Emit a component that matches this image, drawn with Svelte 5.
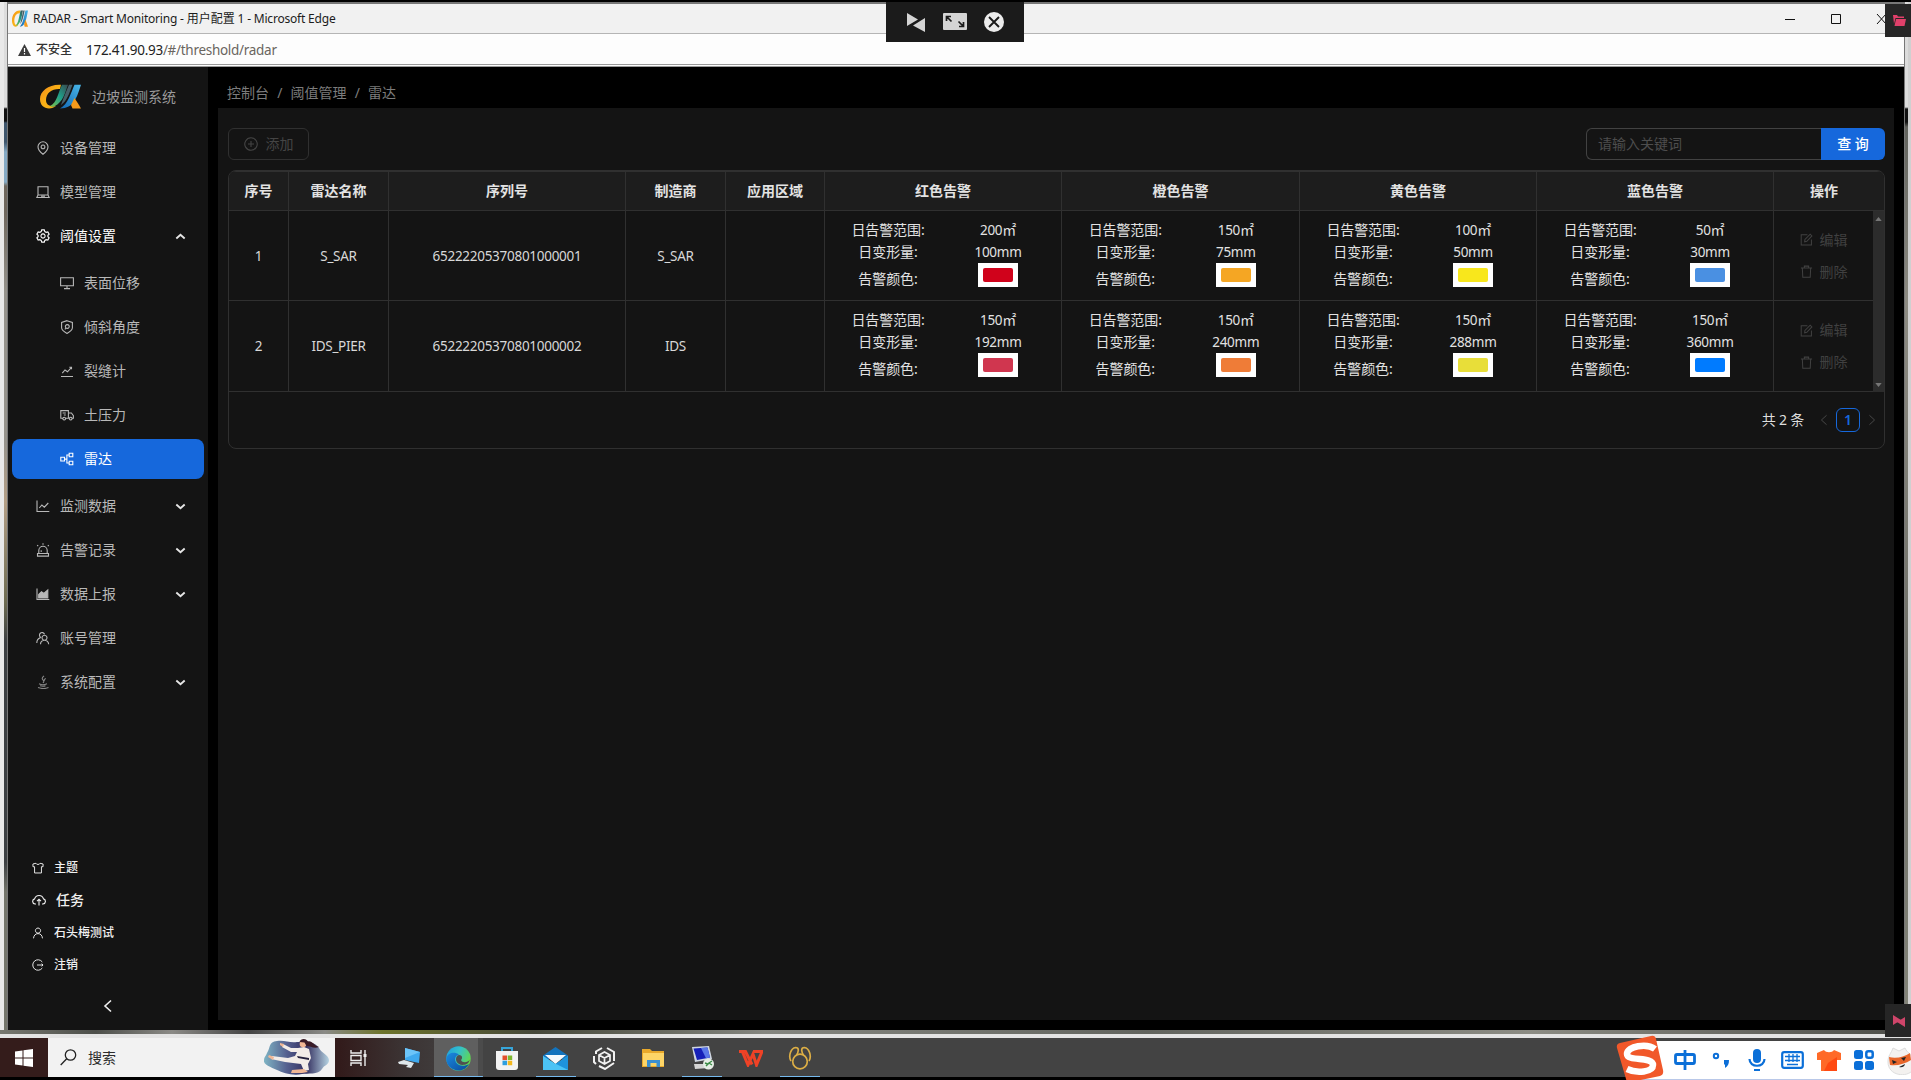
<script>
  // Outline icons on a 14 x 14 grid
  const icons = {
    pin: 'M7 13.3C4 11 2 8.6 2 5.8a5 5 0 0 1 10 0C12 8.600 10 11 7 13.300ZM7 4a1.900 1.900 0 1 0 .01 0Z',
    laptop: 'M2 1.800h10v8.200H2ZM2 10 .8 12.500h12.400L12 10M5 11.300h4',
    gear: 'M5.700 .9h2.600l.5 1.700 1.300.75 1.750-.45 1.300 2.200L11.900 6.300v1.400l1.250 1.200-1.300 2.200-1.750-.45-1.300.75-.5 1.700H5.700l-.5-1.700-1.300-.75-1.750.45-1.300-2.200L2.100 7.700V6.300L.85 5.100l1.300-2.200 1.750.45 1.300-.75ZM7 4.900a2.100 2.100 0 1 0 .01 0Z',
    monitor: 'M.6 1.700h12.800v8H.6ZM7 9.700v2.800M4 12.600h6',
    shield: 'M7 .7 12.400 2.400v5.400c0 2.500-3.200 4.400-5.400 5.600C4.800 12.200 1.600 10.300 1.600 7.800V2.400ZM7.300 4.600a1.900 1.900 0 1 0 .01 0ZM6 8 4.900 9.300',
    trend: 'M1 12.500h12M2.300 9.200 5 6l2.500 1.800L11.500 3.300M9.300 3.300h2.200v2',
    truck: 'M2.500 10.300H.8V2.600h7.600v7.700H5.800M8.400 5h3l2 2.700v2.600h-1M9 10.300h-.6M2.600 5h3.200M3.800 7h2M4.200 9.200a1.400 1.400 0 1 0 .01 0ZM10.700 9.200a1.400 1.400 0 1 0 .01 0Z',
    nodes: 'M.8 5.300h3.700v3.700H.8ZM9.200 1.200h3.600v3.600H9.200ZM9.200 9.200h3.600v3.600H9.200ZM4.500 7.100h2.400M9.200 3H6.900v8h2.300',
    line: 'M1 1.500v11h12.300M3.300 9 5.900 6l2.400 2.200 4-4.200',
    alarm: 'M2.800 10.500V7.500a4.200 4.200 0 0 1 8.400 0v3M1.500 10.500h11v2.600h-11ZM7 .3v1.500M1.200 2.200l1 1M12.800 2.200l-1 1M5.200 9V7.300',
    team: 'M5 6.500a2.600 2.600 0 1 1 3.500-3.300M.8 12c0-3 1.500-4.600 3.600-5.300M8.500 4.200a2.500 2.500 0 1 0 .01 0ZM4.500 13.300c.1-2.600 1.600-4.100 4-4.100s3.900 1.500 4.200 4.100',
    cup: 'M8 .8C5.500 3 6 4 7.300 5.300S7.500 7 7 8M9.800 3.500C8 4.500 8 5.200 8.500 6M3 8.800c2 1 6 .9 8 0M4 10.800c2 .6 4 .6 5.500 0M2 12.600c3 1 8 1 10.500 0',
    shirt: 'M4.600 1.500C5 3.300 9 3.300 9.400 1.500L12.900 2.300v3.200H11v7.300H3V5.500H1.100V2.300Z',
    cloud: 'M4 11H3a2.600 2.600 0 0 1-.4-5.100 4.600 4.600 0 0 1 8.900 0A2.600 2.600 0 0 1 11 11h-1M7 12.600V6.300M5 8.200l2-2 2 2',
    user: 'M7 1.200a3 3 0 1 0 .01 0ZM1.800 13.200C2 10 4 7.700 7 7.700s5 2.300 5.200 5.500',
    logout: 'M12 3.500a6.100 6.100 0 1 0 0 7M5.800 7h7M11.200 5.500 12.900 7l-1.700 1.500',
    plus: 'M7 .8a6.200 6.200 0 1 0 .01 0ZM7 4v6M4 7h6',
    edit: 'M8 1.800H1.300v11h11V7M5 9.500 5.300 7 11 1.200l1.800 1.900L7.300 9Z',
    trash: 'M1 3.300h12M4.700 3.300V1.200h4.600v2.100M2.500 3.300l.5 9.900h8l.5-9.900',
    left: 'M10 1.500 4 7l6 5.500',
    right: 'M4 1.500 10 7l-6 5.500',
    up: 'M2.500 9.200 7 5.200l4.500 4',
    down: 'M2.500 4.800 7 8.800l4.500-4'
  };

  const menuTop = [
    { icon: 'pin', label: '设备管理' },
    { icon: 'laptop', label: '模型管理' },
    { icon: 'gear', label: '阈值设置', arrow: 'up', open: true }
  ];
  const subMenu = [
    { icon: 'monitor', label: '表面位移' },
    { icon: 'shield', label: '倾斜角度' },
    { icon: 'trend', label: '裂缝计' },
    { icon: 'truck', label: '土压力' },
    { icon: 'nodes', label: '雷达', active: true }
  ];
  const menuBottom = [
    { icon: 'line', label: '监测数据', arrow: 'down' },
    { icon: 'alarm', label: '告警记录', arrow: 'down' },
    { icon: 'area', label: '数据上报', arrow: 'down' },
    { icon: 'team', label: '账号管理' },
    { icon: 'cup', label: '系统配置', arrow: 'down', dim: true }
  ];
  const footer = [
    { icon: 'shirt', label: '主题' },
    { icon: 'cloud', label: '任务', big: true },
    { icon: 'user', label: '石头梅测试' },
    { icon: 'logout', label: '注销' }
  ];
  const headers = ['序号', '雷达名称', '序列号', '制造商', '应用区域', '红色告警', '橙色告警', '黄色告警', '蓝色告警', '操作'];
  const rows = [
    {
      cells: ['1', 'S_SAR', '65222205370801000001', 'S_SAR', ''],
      alerts: [
        ['200', '100mm', '#d0021b'],
        ['150', '75mm', '#f5a623'],
        ['100', '50mm', '#f8e71c'],
        ['50', '30mm', '#4a90e2']
      ]
    },
    {
      cells: ['2', 'IDS_PIER', '65222205370801000002', 'IDS', ''],
      alerts: [
        ['150', '192mm', '#d0364f'],
        ['150', '240mm', '#ef7c37'],
        ['150', '288mm', '#e8de39'],
        ['150', '360mm', '#007bff']
      ]
    }
  ];
</script>

{#snippet icon(name, size = 14)}
  <svg class="ico" width={size} height={size} viewBox="0 0 14 14">
    {#if name === 'area'}
      <path d="M1 1.500v11h12.300" />
      <path class="solid" d="M2.700 11V7.500L5.500 4.800l2.300 1.700 4-3.500V11Z" />
    {:else}
      <path d={icons[name]} />
    {/if}
  </svg>
{/snippet}

{#snippet menuItem(item, sub)}
  <div class="item" class:sub class:active={item.active} class:open={item.open} class:dim={item.dim}>
    {@render icon(item.icon)}
    <span>{item.label}</span>
    {#if item.arrow}
      <i class="caret">{@render icon(item.arrow, 13)}</i>
    {/if}
  </div>
{/snippet}

{#snippet logo(w, h)}
  <svg width={w} height={h} viewBox="0 0 41 25" preserveAspectRatio="none">
    <defs>
      <linearGradient id="lg-y" x1="0" y1="0" x2="1" y2="1"><stop offset="0" stop-color="#f08a1c" /><stop offset=".5" stop-color="#fbb215" /><stop offset="1" stop-color="#e9a51b" /></linearGradient>
      <linearGradient id="lg-g" x1="1" y1="0" x2="0" y2="1"><stop offset="0" stop-color="#3a4a50" /><stop offset=".5" stop-color="#1fa08a" /><stop offset="1" stop-color="#7fc04a" /></linearGradient>
      <linearGradient id="lg-b" x1="1" y1="0" x2="0" y2="1"><stop offset="0" stop-color="#49b7e8" /><stop offset="1" stop-color="#1268b4" /></linearGradient>
    </defs>
    <path d="M21 .8C9 0 0 7 0 15c0 6 4 9.500 9 9.500 3 0 5-1 7-2.500-6 1-10-1-10-6C6 9 12 4.500 20 5Z" fill="url(#lg-y)" />
    <path d="M22 .8h6C25 9 23 18 15 22c-2 1-4 1-5 0 7-3 8-13 12-21.200Z" fill="url(#lg-g)" />
    <path d="M29 .8h3.500C29 10 27 17 21 21c2-6 5-13 8-20.200Z" fill="#47606a" />
    <path d="M34.500 .8H41C37 13 34 24.500 20 24.500c8-4 11-16 14.500-23.700Z" fill="url(#lg-b)" />
    <path d="M34.500 14c2 3 4.500 7 6.500 10.500h-8.500L31 21Z" fill="#f59a1b" />
  </svg>
{/snippet}

<div class="desktop">
  <div class="workarea">
    <div class="backdrop left"></div>
    <div class="window">
      <header class="titlebar">
        {@render logo(16, 17)}
        <span class="title">RADAR - Smart Monitoring - <b>用户配置</b> 1 - Microsoft Edge</span>
        <svg class="winctl" width="108" height="14" viewBox="0 0 108 14">
          <path d="M2 7.500h10M48.500 2.500h9v9h-9ZM94 2l9 10M103 2l-9 10" />
        </svg>
      </header>
      <div class="address">
        <svg width="13" height="12" viewBox="0 0 13 12"><path d="M6.500 0 13 12H0Z" fill="#3b3b3b" /><path d="M6.500 4v4M6.500 9v1.500" stroke="#fff" stroke-width="1.200" /></svg>
        <b>不安全</b>
        <span class="url">172.41.90.93<em>/#/threshold/radar</em></span>
      </div>

      <div class="app">
        <aside>
          <div class="brand">{@render logo(41, 25)}<span>边坡监测系统</span></div>
          <nav>
            {#each menuTop as m}{@render menuItem(m, false)}{/each}
            <div class="group">
              {#each subMenu as m}{@render menuItem(m, true)}{/each}
            </div>
            {#each menuBottom as m}{@render menuItem(m, false)}{/each}
          </nav>
          <div class="foot">
            {#each footer as f}
              <div class="footitem" class:big={f.big}>{@render icon(f.icon, f.big ? 14 : 12)}<span>{f.label}</span></div>
            {/each}
          </div>
          <div class="collapse">{@render icon('left', 14)}</div>
        </aside>

        <main>
          <div class="crumbs"><span>控制台</span><i>/</i><span>阈值管理</span><i>/</i><span>雷达</span></div>
          <section class="panel">
            <div class="tools">
              <button class="add">{@render icon('plus')}<span>添加</span></button>
              <div class="search">
                <div class="field">请输入关键词</div>
                <button class="go">查 询</button>
              </div>
            </div>

            <div class="table">
              <div class="thead cols">
                {#each headers as h}<div class="th">{h}</div>{/each}
              </div>
              <div class="tbody">
                <div class="trs">
                  {#each rows as r}
                    <div class="tr cols">
                      {#each r.cells as c}<div class="td">{c}</div>{/each}
                      {#each r.alerts as a}
                        <div class="td alert">
                          <span class="k">日告警范围:</span><span>{a[0]}<u>㎡</u></span>
                          <span class="k">日变形量:</span><span>{a[1]}</span>
                          <span class="k low">告警颜色:</span><span class="swatch"><i style="background:{a[2]}"></i></span>
                        </div>
                      {/each}
                      <div class="td ops">
                        <div>{@render icon('edit', 13)}<span>编辑</span></div>
                        <div>{@render icon('trash', 13)}<span>删除</span></div>
                      </div>
                    </div>
                  {/each}
                </div>
                <div class="scroll">
                  <svg width="7" height="4" viewBox="0 0 8 5"><path d="M4 0 8 5H0Z" /></svg>
                  <svg width="7" height="4" viewBox="0 0 8 5"><path d="M0 0h8L4 5Z" /></svg>
                </div>
              </div>
              <div class="pager">
                <span class="total">共 2 条</span>
                {@render icon('left', 12)}
                <span class="page">1</span>
                {@render icon('right', 12)}
              </div>
            </div>
          </section>
        </main>
      </div>
    </div>
    <div class="backdrop right"></div>
  </div>
  <div class="strip"></div>

  <div class="taskbar">
    <div class="start">
      <svg width="18" height="18" viewBox="0 0 18 18"><path fill="#fff" d="M0 2.500 7.500 1.500v7H0ZM8.500 1.300 18 0v8.500H8.500ZM0 9.500h7.500v7L0 15.500ZM8.500 9.500H18V18L8.500 16.700Z" /></svg>
    </div>
    <div class="find">
      <svg width="17" height="17" viewBox="0 0 17 17"><circle cx="10.500" cy="6" r="5.200" /><path d="M6.700 9.800.7 16" /></svg>
      <span>搜索</span>
      <svg class="art" width="68" height="38" viewBox="0 0 68 38">
        <defs><linearGradient id="sky"><stop offset="0" stop-color="#7fb4c4" /><stop offset=".35" stop-color="#55608f" /><stop offset=".65" stop-color="#343060" /><stop offset="1" stop-color="#b6d3e2" /></linearGradient></defs>
        <path fill="url(#sky)" d="M4 14C8 8 5 3 14 2c8-1 12 2 20 1 8 0 18-1 22 6 3 6 9 6 10 12 0 5-5 5-7 9-4 6-14 4-20 5-9 2-19-1-25-4C8 28 0 26 1 21c0-3 2-4 3-7Z" />
        <path d="M43 3c6-3 7 3 13 5-5 2-9-1-12-1Z" fill="#3a1c28" />
        <path d="m20 5 8 4 7 0 6-1 5 2 2 9-3 6 1 6-5 1-3-7-16-2-14-3 1-3 16 2 7-2 2-4-6 0-9-5Z" fill="#f2ece8" />
        <circle cx="40" cy="5" r="3.300" fill="#f1b795" />
        <path d="M36.500 3c1-4 8-4 9 1l-2 3-2-3.500Z" fill="#3a1c28" />
        <path d="m6 16 5 2-1 3-5-3ZM17 4l4 1-1 3-3-2ZM29 31l12-1 4 3-6 1-11 0Z" fill="#f1b795" />
        <path d="m34 17 12 2v2l-11-2Z" fill="#25213d" />
      </svg>
    </div>
    <div class="tb view">
      <svg width="18" height="18" viewBox="0 0 18 18" fill="none" stroke="#eee" stroke-width="1.400"><path d="M1 1v3h10V1M1 17v-3h10v3M1 6.500h10v5H1ZM15 1v16" /><path d="M15 5v3" stroke-width="3" /></svg>
    </div>
    <div class="tb">
      <svg width="24" height="22" viewBox="0 0 24 22"><path d="m8 1 15 4-1 11-14-3Z" fill="#3fa9ee" /><path d="m8 1 15 4-15 6Z" fill="#6cc4f8" /><path d="m1 15 6-2 10 3-3 5-5-1 2-2-9-1Z" fill="#dfe6ea" /></svg>
    </div>
    <div class="tb on lit">
      <svg width="25" height="25" viewBox="0 0 25 25">
        <defs>
          <linearGradient id="e1" x1="0" y1="0" x2="1" y2=".5"><stop offset="0" stop-color="#1b9de2" /><stop offset=".5" stop-color="#35c1c9" /><stop offset="1" stop-color="#62d84e" /></linearGradient>
          <linearGradient id="e2" x1="0" y1="0" x2="1" y2="1"><stop offset="0" stop-color="#1b8be0" /><stop offset="1" stop-color="#0a4a9c" /></linearGradient>
        </defs>
        <circle cx="12.500" cy="12.500" r="12.200" fill="url(#e1)" />
        <path d="M.4 12C2 6 9 5.500 13 8.500c-5 1-5.500 8 0 10.500 3 1.500 7 .8 10-1-3 6-10 8-15 5.500C3 21.500 0 17 .4 12Z" fill="url(#e2)" />
        <path d="M13 9c4 0 3.500 4 2 5 1 3 7 3 8.700-.5C23 19 16 20 13 18c-4-2-4-8 0-9Z" fill="#505050" />
      </svg>
    </div>
    <div class="tb">
      <svg width="24" height="25" viewBox="0 0 24 25"><path d="M7 6V2h10v4" fill="none" stroke="#36a5da" stroke-width="2" /><path d="M1 5h22v16a3 3 0 0 1-3 3H4a3 3 0 0 1-3-3Z" fill="#f3f3f3" /><path fill="#e2502d" d="M7.500 9.500H12V14H7.500Z" /><path fill="#7db72f" d="M12.700 9.500h4.500V14h-4.500Z" /><path fill="#2f9fe0" d="M7.500 14.700H12v4.500H7.500Z" /><path fill="#f4b81d" d="M12.700 14.700h4.500v4.500h-4.500Z" /></svg>
    </div>
    <div class="tb on">
      <svg width="25" height="23" viewBox="0 0 25 23"><path d="M0 8.500 12.500 0 25 8.500V12H0Z" fill="#1373bd" /><path d="M2 8h21l-10.500 9Z" fill="#f5f9fc" /><path d="M0 9v14h25V9L12.500 17Z" fill="#35b4ee" /><path d="m13 16.700 12-7.700v14Z" fill="#1e93dc" /><path d="m0 9 12.500 8L25 23H0Z" fill="#4cc3f5" /></svg>
    </div>
    <div class="tb">
      <svg width="23" height="24" viewBox="0 0 23 24" fill="none" stroke="#f2f2f2" stroke-width="2"><path d="M9 2 3 5.500V8M1 10v6l2 2M14 2l7 4v9M21 17l-9 6-6-3" /><path d="m11.500 6 5.500 3v6l-5.500 3L6 15V9ZM6 9l5.500 3L17 9M11.500 12v6" stroke-width="1.700" /></svg>
    </div>
    <div class="tb">
      <svg width="23" height="20" viewBox="0 0 23 20"><path d="M0 1h8l2 2h12v16H0Z" fill="#e9a92b" /><path d="M1 5h21v13H1Z" fill="#fdd567" /><path d="M5 19v-7h13v7h-3.500v-4h-6v4Z" fill="#3b8fd0" /></svg>
    </div>
    <div class="tb on">
      <svg width="23" height="24" viewBox="0 0 23 24"><path d="m1 1 17-1 3 13-17 3Z" fill="#cfd6e2" /><path d="m2.500 2.500 14-1 2.500 10-13 2.500Z" fill="#1620b8" /><path d="m10 2 6.500-.5 2.500 10-4 .8Z" fill="#5a78e8" /><path d="M3 18h12l3 4-14 1Z" fill="#d5d5d5" /><circle cx="17.500" cy="18" r="5.500" fill="#e6eee6" /><path d="m14 17 3 1-2 2M21 15l-3 2 3 2" fill="none" stroke="#3a8b45" stroke-width="1.400" /></svg>
    </div>
    <div class="tb">
      <svg width="24" height="17" viewBox="0 0 24 17" fill="none" stroke="#ef4226" stroke-width="3"><path d="M0 1.500h6.500L13 14.500M3.500 2 9 15 14 4l3.500 11L23 1.500h-9" /></svg>
    </div>
    <div class="tb on">
      <svg width="24" height="24" viewBox="0 0 24 24" fill="none" stroke="#dcae45" stroke-width="1.700"><circle cx="12" cy="15.500" r="7.300" /><path d="M3 15C0 10 3 2 7.500 1.500 12 1.500 10 7 8.500 9M21 15c3-5 0-13-4.500-13.500C12 1.500 14 7 15.500 9" /></svg>
    </div>
  </div>

  <div class="ime">
    <svg class="sogou" width="48" height="47" viewBox="0 0 48 47"><path d="M4 8 35 1q4-1 5 3l7 31q1 5-3 6L15 47q-4 1-5-3L1 13q-1-4 3-5Z" fill="#f1582a" /><path d="M39 14C31 8 11 11 11 19c0 8 26 2 26 11 0 7-16 9-26 4" fill="none" stroke="#fff" stroke-width="6.500" /></svg>
    <span><svg width="22" height="22" viewBox="0 0 22 22" fill="none" stroke="#0b6fd8" stroke-width="2.800"><rect x="1.500" y="5.500" width="19" height="9" rx="1.500" /><path d="M11 1v20" /></svg></span>
    <span><svg width="18" height="17" viewBox="0 0 18 17"><circle cx="4" cy="4" r="2.200" fill="none" stroke="#0b6fd8" stroke-width="2" /><path d="M12 8h5c0 4-1 6-4 8v-3l-1-1Z" fill="#0b6fd8" /></svg></span>
    <span><svg width="18" height="24" viewBox="0 0 18 24" fill="none" stroke="#0b6fd8" stroke-width="2.200"><rect x="5" y="1" width="8" height="14" rx="4" fill="#0b6fd8" stroke="none" /><path d="M1.500 11c0 9 15 9 15 0M6 22h6" /></svg></span>
    <span><svg width="23" height="18" viewBox="0 0 23 18" fill="none" stroke="#0b6fd8" stroke-width="2.200"><rect x="1.200" y="1.200" width="20.600" height="15.600" rx="2" /><path d="M4 5.500h15M4 9.500h15M6 13.500h11M8 3v8M12 3v8M16 3v8" stroke-width="1.300" /></svg></span>
    <span><svg width="26" height="23" viewBox="0 0 26 23"><path d="M8 1c2 3 8 3 10 0l7 3v7h-4v11H5V11H1V4Z" fill="#ff6a28" /><path d="M12 14 21 8v14H8Z" fill="#ff4a12" /></svg></span>
    <span><svg width="20" height="20" viewBox="0 0 20 20" fill="#0b6fd8"><rect y="0" width="9" height="9" rx="2.500" /><rect x="12.300" y="1.300" width="6.400" height="6.400" rx="2" fill="none" stroke="#0b6fd8" stroke-width="2.500" /><rect y="11" width="9" height="9" rx="2.500" /><rect x="11" y="11" width="9" height="9" rx="2.500" /></svg></span>
    <span><svg width="26" height="30" viewBox="0 0 26 30"><path d="M1 17C1 10 4 9 6 3l6 3 6-3c2 5 7 6 8 12v10c-6 8-25 6-25-8Z" fill="#f3f1ef" stroke="#ddd" /><path d="M2 12c7 2 15 0 21-4l1 7c-6 4-14 6-21 5Z" fill="#e8662a" /><path d="M5 15l5 2-4 2ZM14 13l5-1-2 4ZM12 22q5 1 6-3" fill="#222" /></svg></span>
  </div>

  <div class="remote">
    <svg width="18" height="20" viewBox="0 0 18 20" fill="#d4d4d4"><path d="M0 1 11 7.500 0 14ZM18 6v14L6 13.500Z" /></svg>
    <svg width="24" height="17" viewBox="0 0 24 17"><rect width="24" height="17" rx="1" fill="#d4d4d4" /><path d="M3.500 8V3.500H8M3.500 3.500l5 5M20.500 9v4.500H16M20.500 13.500l-5-5" fill="none" stroke="#1b1b1b" stroke-width="1.700" /></svg>
    <svg width="20" height="20" viewBox="0 0 20 20"><circle cx="10" cy="10" r="10" fill="#ececec" /><path d="m5 5 10 10M15 5 5 15" stroke="#1b1b1b" stroke-width="1.900" /></svg>
  </div>
  <div class="dock top">
    <svg width="13" height="11" viewBox="0 0 13 11" fill="#e0406a"><path d="M0 0h4l1 1.500h6V3H2.500L1 9ZM3 4h10l-1.500 7H1.500Z" /></svg>
  </div>
  <div class="dock bottom">
    <svg width="12" height="12" viewBox="0 0 12 12" fill="#cf456a"><path d="M0 0 8 5 0 10ZM12 2v10L4 7Z" /></svg>
  </div>
</div>

<style>
  :global(body) {
    margin: 0;
    background: #000;
    overflow: hidden;
  }
  .desktop {
    position: relative;
    width: 1911px;
    height: 1080px;
    overflow: hidden;
    display: flex;
    flex-direction: column;
    background: #000;
    font-family: 'Noto Sans', 'Noto Sans CJK SC', sans-serif;
    font-size: 14px;
    line-height: 22px;
    box-sizing: border-box;
    padding-top: 2px;
  }
  .desktop * {
    box-sizing: border-box;
  }
  i, em {
    font-style: normal;
  }
  .ico {
    display: block;
    flex: none;
    fill: none;
    stroke: currentColor;
    stroke-width: 1.100;
  }
  .solid {
    fill: currentColor;
  }
  .workarea {
    display: flex;
    height: 1028px;
    flex: none;
  }
  .backdrop.left {
    width: 8px;
    border-left: 4px solid #e9e9e9;
    border-right: 1px solid #777;
    background: linear-gradient(#dcdcdc 0 105px, #111 107px 119px, #3f566c 121px 140px, #86aac4 150px 180px, #6f675d 184px 210px, #96938c 290px 440px, #b49f86 500px, #6e6c52 600px, #3c3f42 640px 860px, #75766c 890px);
  }
  .backdrop.right {
    width: 7px;
    border-left: 1px solid #777;
    border-right: 3px solid #d0d0d0;
    background: linear-gradient(#dcdcdc 0 105px, #111 107px 120px, #63645e 125px, #8d8b82 300px, #6c6d65 700px, #85867a);
  }
  .window {
    flex: 1;
    display: flex;
    flex-direction: column;
    border-top: 2px solid #777;
  }
  .titlebar {
    display: flex;
    align-items: center;
    height: 30px;
    padding-left: 4px;
    background: #f1f1f1;
    border-bottom: 1px solid #b5b5b5;
    color: #1c1c1c;
    font-size: 12px;
  }
  .title {
    margin-left: 5px;
    letter-spacing: -0.200px;
    white-space: nowrap;
  }
  .title b {
    font-weight: 400;
    letter-spacing: 0;
  }
  .winctl {
    margin-left: auto;
    margin-right: 13px;
    fill: none;
    stroke: #111;
    stroke-width: 1;
  }
  .address {
    display: flex;
    align-items: center;
    height: 33px;
    padding: 1px 0 0 10px;
    background: #fdfdfd;
    border-bottom: 3px double #999;
    color: #333;
  }
  .address b {
    margin-left: 5px;
    font-size: 12px;
    font-weight: 500;
  }
  .url {
    margin-left: 14px;
    font-size: 13.500px;
    letter-spacing: -0.290px;
    color: #222;
  }
  .url em {
    color: #6a6560;
  }
  .app {
    flex: 1;
    display: flex;
    background: #000;
    border-left: 1px solid #141414;
  }
  aside {
    width: 199px;
    background: #141414;
    display: flex;
    flex-direction: column;
  }
  .brand {
    display: flex;
    align-items: center;
    height: 58px;
    padding: 1px 0 0 31px;
    gap: 11px;
    color: #9a9a9a;
  }
  nav {
    padding: 3px 4px 0 3px;
  }
  .item {
    display: flex;
    align-items: center;
    height: 40px;
    margin-bottom: 4px;
    padding: 0 17px 0 24px;
    gap: 10px;
    color: #b8b8b8;
    border-radius: 8px;
  }
  .item.sub {
    padding-left: 48px;
    gap: 10px;
  }
  .item.open {
    color: #fff;
  }
  .item.dim .ico {
    opacity: 0.700;
  }
  .item.dim .caret .ico {
    opacity: 1;
  }
  .item.active {
    background: #1668dc;
    color: #fff;
  }
  .group {
    padding: 3px 0;
  }
  .caret {
    margin-left: auto;
    color: #e6e6e6;
  }
  .caret .ico {
    stroke-width: 2;
  }
  .foot {
    margin-top: auto;
    padding-left: 23px;
    color: #f0f0f0;
    font-size: 12px;
    font-weight: 500;
  }
  .footitem {
    display: flex;
    align-items: center;
    height: 32.300px;
    gap: 10px;
  }
  .footitem.big {
    font-size: 14px;
  }
  .collapse {
    height: 49px;
    padding: 18px 0 0 92px;
    color: #eee;
  }
  .collapse .ico {
    stroke-width: 1.600;
  }
  main {
    flex: 1;
    padding: 0 10px 10px;
    display: flex;
    flex-direction: column;
  }
  .crumbs {
    height: 41px;
    padding: 15px 0 0 9px;
    display: flex;
    gap: 8px;
    color: #7c7c7c;
  }
  .crumbs i {
    width: 5.500px;
    text-align: center;
  }
  .panel {
    flex: 1;
    background: #141414;
    padding: 20px 9px 0 10px;
  }
  .tools {
    display: flex;
    justify-content: space-between;
  }
  button {
    font: inherit;
    border: 0;
    padding: 0;
  }
  .add {
    width: 81px;
    height: 32px;
    display: flex;
    align-items: center;
    justify-content: center;
    gap: 8px;
    border: 1px solid #303030;
    border-radius: 6px;
    background: transparent;
    color: #444;
  }
  .search {
    display: flex;
    height: 32px;
  }
  .field {
    width: 235px;
    padding: 4px 11px;
    border: 1px solid #424242;
    border-right: 0;
    border-radius: 6px 0 0 6px;
    color: #4d4d4d;
  }
  .go {
    width: 64px;
    background: #1668dc;
    color: #fff;
    border-radius: 0 6px 6px 0;
    font-weight: 500;
  }
  .table {
    margin-top: 10px;
    height: 279px;
    border: 1px solid #303030;
    border-radius: 8px;
    overflow: hidden;
  }
  .cols {
    display: grid;
    grid-template-columns: 60px 100px 237px 100px 99px 237px 238px 237px 237px 1fr;
  }
  .thead {
    height: 40px;
    background: #1d1d1d;
    border-top: 1px solid #303030;
    border-bottom: 1px solid #303030;
    color: #e3e3e3;
    font-weight: 600;
    text-align: center;
  }
  .th {
    padding-top: 8px;
    border-right: 1px solid #303030;
  }
  .th:last-child {
    border: 0;
    padding-right: 10px;
  }
  .tbody {
    display: flex;
    border-left: 1px solid #303030;
    margin-left: -1px;
  }
  .trs {
    flex: 1;
  }
  .tr {
    height: 90px;
    border-bottom: 1px solid #303030;
  }
  .tr:last-child {
    height: 91px;
  }
  .td {
    display: flex;
    align-items: center;
    justify-content: center;
    border-right: 1px solid #303030;
    color: #d8d8d8;
    font-size: 13.500px;
    letter-spacing: -0.280px;
  }
  .td:last-child {
    border: 0;
  }
  .alert {
    display: grid;
    grid-template-columns: 1fr 1fr;
    grid-template-rows: 22px 22px 28px;
    padding: 8px 8px 0;
    align-content: start;
    justify-items: center;
    color: #e2e2e2;
  }
  .alert .k {
    font-size: 14px;
    letter-spacing: -0.100px;
  }
  .alert .low {
    padding-top: 3px;
  }
  .alert u {
    text-decoration: none;
    font-size: 14px;
  }
  .swatch {
    width: 40px;
    height: 24px;
    padding: 5px;
    margin-bottom: auto;
    background: #fff;
    align-self: start;
  }
  .swatch i {
    display: block;
    height: 14px;
    border-radius: 2px;
  }
  .ops {
    flex-direction: column;
    color: #404040;
    font-size: 14px;
    letter-spacing: 0;
  }
  .ops div {
    display: flex;
    align-items: center;
    gap: 7px;
    height: 32px;
  }
  .scroll {
    width: 11px;
    padding: 6px 0 5px;
    background: #2c2c2c;
    display: flex;
    flex-direction: column;
    align-items: center;
    justify-content: space-between;
    fill: #767676;
  }
  .pager {
    display: flex;
    align-items: center;
    justify-content: flex-end;
    height: 56px;
    padding-right: 6px;
    color: #4a4a4a;
  }
  .total {
    color: #dedede;
    margin-right: 14px;
    font-size: 14px;
    letter-spacing: -0.200px;
  }
  .page {
    width: 24px;
    height: 24px;
    margin: 0 6px 0 6px;
    border: 1px solid #1668dc;
    border-radius: 6px;
    color: #1668dc;
    text-align: center;
    font-weight: 600;
  }
  .strip {
    height: 8px;
    flex: none;
    background: linear-gradient(#0000 0 4px, #e4e4e4 4px), linear-gradient(90deg, #777870, #4d4f4a 5%, #8b8a86 9%, #444 13%, #8a8a86 17%, #6d742c 20%, #46483a 28%, #858680 40%, #62645e 60%, #8c8c84 80%, #4c4d48);
  }
  .taskbar {
    display: flex;
    height: 39px;
    flex: none;
    background: linear-gradient(90deg, #321b1b 0 340px, #3b3232 400px, #434343 470px);
  }
  .start {
    width: 48px;
    display: grid;
    place-items: center;
    background: #341c1b;
  }
  .find {
    width: 287px;
    display: flex;
    align-items: center;
    padding: 0 4px 0 12px;
    gap: 11px;
    background: #f2f2f2;
    color: #2c2c2c;
  }
  .find svg:first-child {
    fill: none;
    stroke: #222;
    stroke-width: 1.300;
  }
  .find .art {
    margin-left: auto;
  }
  .tb {
    width: 48.800px;
    display: grid;
    place-items: center;
    padding-top: 1px;
  }
  .tb.view {
    width: 50px;
    padding-right: 2px;
  }
  .tb.on {
    background: linear-gradient(#76b9ed, #76b9ed) center bottom / 40px 1px no-repeat;
  }
  .tb.lit {
    background: linear-gradient(#76b9ed, #76b9ed) center bottom / 100% 1px no-repeat, linear-gradient(90deg, #5f5f5f 44px, #4b4b4b 44px);
  }
  .ime {
    position: absolute;
    left: 1640px;
    top: 1041px;
    width: 271px;
    height: 39px;
    display: flex;
    align-items: center;
    padding-left: 27px;
    background: #fff;
    border-bottom: 1px solid #b9c8e8;
  }
  .ime span {
    width: 35.900px;
    flex: none;
    display: grid;
    place-items: center;
  }
  .ime .sogou {
    position: absolute;
    left: -24px;
    top: -6px;
  }
  .remote {
    position: absolute;
    left: 886px;
    top: 2px;
    width: 138px;
    height: 40px;
    display: flex;
    align-items: center;
    padding: 0 20px 1px 21px;
    justify-content: space-between;
    background: #1b1b1b;
  }
  .dock {
    position: absolute;
    left: 1885px;
    width: 26px;
    height: 33px;
    display: grid;
    place-items: center;
    background: #262626;
    padding-left: 2px;
  }
  .dock.top {
    top: 4px;
  }
  .dock.bottom {
    top: 1004px;
  }
</style>
